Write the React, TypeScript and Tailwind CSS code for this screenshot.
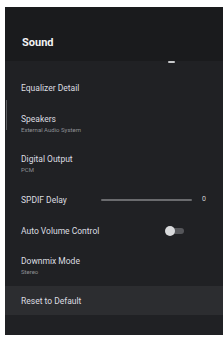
import type { ReactNode } from "react";

function Row({
  title,
  subtitle,
  height,
  highlighted,
  right,
}: {
  title: string;
  subtitle?: string;
  height: string;
  highlighted?: boolean;
  right?: ReactNode;
}) {
  return (
    <div
      className={`flex items-center pl-[16px] pr-[14px] ${height} ${
        highlighted ? "bg-[#2c2d30]" : ""
      }`}
    >
      <div className="flex flex-col">
        <span className="text-[8.5px] leading-[10px] text-[#dcdde0]">{title}</span>
        {subtitle ? (
          <span className="mt-[2px] text-[6px] leading-[7px] text-[#8e9094]">{subtitle}</span>
        ) : null}
      </div>
      {right}
    </div>
  );
}

export default function App() {
  return (
    <div
      className="h-[337px] w-[223px] bg-white pl-[5px] pt-[7px] pb-[2px]"
      style={{ fontFamily: "Roboto, 'Liberation Sans', sans-serif" }}
    >
      <div className="relative flex h-full flex-col bg-[#202124]">
        {/* left scroll hint */}
        <div className="absolute left-[1px] top-[93px] h-[30px] w-[1px] bg-[#5a5b5e]" />

        <div className="flex h-[54px] shrink-0 items-center bg-[#1a1b1d] pl-[17px] pt-[18px]">
          <h1 className="text-[11px] font-bold text-[#f1f2f3]">Sound</h1>
        </div>

        <div className="relative flex flex-col pt-[12px]">
          <div className="absolute left-[163px] top-[0px] h-[2px] w-[7px] rounded-full bg-[#c8c9cb]" />
          <Row title="Equalizer Detail" height="h-[30px]" />
          <Row title="Speakers" subtitle="External Audio System" height="h-[40px]" />
          <Row title="Digital Output" subtitle="PCM" height="h-[40px]" />
          <Row
            title="SPDIF Delay"
            height="h-[33px]"
            right={
              <div className="ml-auto mr-[3px] flex items-center">
                <div className="h-[2px] w-[91px] rounded-full bg-[#6a6b6e]" />
                <span className="ml-[10px] w-[4px] text-[7px] text-[#d0d1d3]">0</span>
              </div>
            }
          />
          <Row
            title="Auto Volume Control"
            height="h-[29px]"
            right={
              <div className="relative ml-auto mr-[24px] h-[10px] w-[20px]">
                <div className="absolute left-[4px] top-[2px] h-[6px] w-[15px] rounded-full bg-[#55565a]" />
                <div className="absolute left-0 top-0 h-[10px] w-[10px] rounded-full bg-[#d9dadc]" />
              </div>
            }
          />
          <Row title="Downmix Mode" subtitle="Stereo" height="h-[41px]" />
          <Row title="Reset to Default" height="h-[29px]" highlighted />
        </div>
      </div>
    </div>
  );
}
